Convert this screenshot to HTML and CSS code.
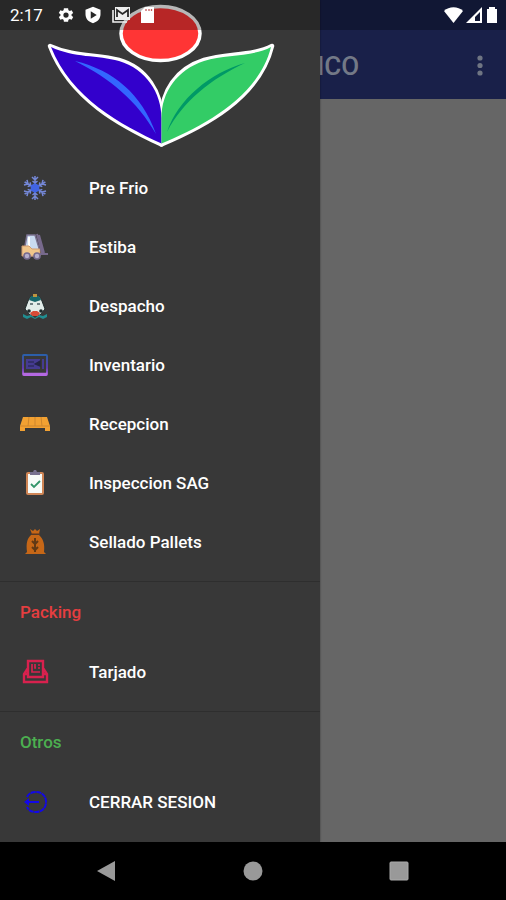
FILE: index.html
```html
<!DOCTYPE html>
<html lang="es">
<head>
<meta charset="utf-8">
<meta name="viewport" content="width=device-width, initial-scale=1">
<title>Menu</title>
<link rel="stylesheet" href="styles.css">
</head>
<body>
<div class="screen">
  <header class="app-bar">
    <h1 class="app-title">ICO</h1>
    <button class="more" type="button" aria-label="Opciones">
      <svg width="8" height="24" viewBox="0 0 8 24"><g fill="#6f7583"><circle cx="4" cy="4" r="2.6"/><circle cx="4" cy="11.5" r="2.6"/><circle cx="4" cy="19" r="2.6"/></g></svg>
    </button>
  </header>
  <main class="content"></main>

  <aside class="drawer">
    <div class="drawer-header">
      <svg class="logo" viewBox="0 0 320 159" aria-hidden="true">
        <ellipse cx="160.5" cy="33.5" rx="39.5" ry="27" fill="#ff3535" stroke="#fff" stroke-width="3.5"/>
        <g fill="#fff" stroke="#fff" stroke-width="4.5" stroke-linejoin="round">
          <path d="M50 46C74 57 98 54 119 60C147 68 161.500 93 161.500 118V144.500C121 126 70 99 50 46Z"/>
          <path d="M272 46C253 56 226 53 204 60C176 69 161.500 91 161.500 118V144.500C203 127 259 99 272 46Z"/>
        </g>
        <path d="M51 47C74 58 98 55 119 61C146 69 161.500 93 161.500 118V143.500C121 125 71 98 51 47Z" fill="#3300cc"/>
        <path d="M271 47C253 57 226 54 204 61C177 70 161.500 92 161.500 118V143.500C203 126 258 98 271 47Z" fill="#33cc66"/>
        <path d="M75 61C113 70 142 94 156 134C137 101 111 79 75 61Z" fill="#3366ff"/>
        <path d="M245 63C210 73 178 99 167 132C183 101 211 79 245 63Z" fill="#009966"/>
      </svg>
    </div>
    <nav>
      <ul class="menu">
        <li><a class="item" href="#"><svg class="icon" viewBox="0 0 30 30"><g stroke="#7588d8" stroke-width="1.5" fill="none"><g id="arm"><path d="M15 15V3M12 4L15 7L18 4M12.500 8L15 10L17.500 8"/></g><use href="#arm" transform="rotate(60 15 15)"/><use href="#arm" transform="rotate(120 15 15)"/><use href="#arm" transform="rotate(180 15 15)"/><use href="#arm" transform="rotate(240 15 15)"/><use href="#arm" transform="rotate(300 15 15)"/></g><path d="M15 10L19.300 12.500V17.500L15 20L10.700 17.500V12.500Z" fill="#4164e4"/></svg><span>Pre Frio</span></a></li>
        <li><a class="item" href="#"><svg class="icon" viewBox="0 0 30 30"><path d="M5 14L7 3H15L19 16V24H5Z" fill="#c9daf0" stroke="#79708f" stroke-width="1.5"/><path d="M9 5V14" stroke="#fff" stroke-width="2"/><path d="M2 14H9L12 17H20V24H2Z" fill="#f0c68b" stroke="#d29c70"/><path d="M17 2L22 21M19 3L24 21M20 22H28" stroke="#77698c" stroke-width="2" fill="none"/><g fill="#b5aecb" stroke="#766b8e" stroke-width="1.6"><circle cx="7" cy="24" r="3"/><circle cx="17" cy="24" r="3"/></g></svg><span>Estiba</span></a></li>
        <li><a class="item" href="#"><svg class="icon" viewBox="0 0 30 30"><path d="M8 10L10 6H20L22 10L25 18L20 24H10L5 18Z" fill="#e2ece9" stroke="#202b2c"/><path d="M9 9L11 5H19L21 9L15 11Z" fill="#17666a"/><path d="M13 3H17V6H13Z" fill="#bc9440"/><path d="M10 12H13V14H10ZM17 12H20V14H17Z" fill="#718083"/><circle cx="9" cy="20" r="1.8" fill="#202b2c"/><circle cx="21" cy="20" r="1.8" fill="#202b2c"/><path d="M10 22L13 20H17L20 22L18 25H12Z" fill="#d64b36"/><path d="M3 23L7 25L11 24L15 27L19 24L23 25L27 23V26L23 28L19 26L15 28L11 26L7 28L3 26Z" fill="#208e91"/></svg><span>Despacho</span></a></li>
        <li><a class="item" href="#"><svg class="icon" viewBox="0 0 30 30"><defs><linearGradient id="screen" x2="0" y2="1"><stop stop-color="#2b5fa9"/><stop offset=".65" stop-color="#653cba"/><stop offset="1" stop-color="#b765e8"/></linearGradient></defs><rect x="3" y="5" width="24" height="20" rx="1" fill="none" stroke="url(#screen)" stroke-width="1.8"/><path d="M3 24H27" stroke="#b46ae0" stroke-width="2.5"/><path d="M6 9H20V19H6ZM22 9H24V19H22Z" fill="#453b91"/><path d="M8 12H14M8 16H14M15 14L20 11V16Z" stroke="#232445" stroke-width="1.2" fill="#232445"/></svg><span>Inventario</span></a></li>
        <li><a class="item" href="#"><svg class="icon" viewBox="0 0 30 30"><path d="M3 8H27L30 17V22H25V19H5V22H0V17Z" fill="#f2a132"/><path d="M9 8L8 17M15 8V17M21 8L22 17M0 17H30" stroke="#ce862c" stroke-width="1"/></svg><span>Recepcion</span></a></li>
        <li><a class="item" href="#"><svg class="icon" viewBox="0 0 30 30"><rect x="7" y="5" width="16" height="21" rx="1" fill="#f7fbf8" stroke="#cf8555" stroke-width="2"/><path d="M10 4H13L14 2H16L17 4H20V7H10Z" fill="#77718f"/><path d="M11 16L14 19L20 13" fill="none" stroke="#329569" stroke-width="1.8"/></svg><span>Inspeccion SAG</span></a></li>
        <li><a class="item" href="#"><svg class="icon" viewBox="0 0 30 30"><path d="M10 2L13 4L15 2L17 4L20 2L19 7H12ZM11 8H19C23 12 25 16 24 25L26 27H5L7 25C6 16 7 12 11 8Z" fill="#c66717"/><path d="M11 7H20" stroke="#723d19" stroke-width="1.2"/><path d="M15 11V25M15 17L12 14M15 17L18 14M15 23L12 20M15 23L18 20" stroke="#603915" stroke-width="2"/></svg><span>Sellado Pallets</span></a></li>
      </ul>
      <section class="group">
        <h2 class="group-title packing">Packing</h2>
        <ul class="menu">
          <li><a class="item" href="#"><svg class="icon" viewBox="0 0 30 30"><g fill="none" stroke="#d8214e" stroke-width="2.4"><path d="M8 17V4H23V17M8 11L4 17V25H27V17L23 11M4 17H8V20H23V17H27"/><path d="M12 7V15H20M15 7V11H16M18 8H20M18 11H20" stroke-width="1.7"/></g></svg><span>Tarjado</span></a></li>
        </ul>
      </section>
      <section class="group">
        <h2 class="group-title others">Otros</h2>
        <ul class="menu">
          <li><a class="item" href="#"><svg class="icon" viewBox="0 0 30 30"><g fill="none" stroke="#1208e8" stroke-width="2"><path d="M7 10C9 6 12 5 16 5C22 5 26 9 26 15C26 21 22 25 16 25C12 25 9 24 7 20" stroke-dasharray="5 .6"/><path d="M7 15H19"/></g><path d="M4 15L9 11V19Z" fill="#1208e8"/></svg><span>CERRAR SESION</span></a></li>
        </ul>
      </section>
    </nav>
  </aside>

  <div class="status">
    <div class="status-left">
      <span class="time">2:17</span>
      <svg width="18" height="18" viewBox="0 0 24 24"><path fill="#fff" d="M19.400 13a7.500 7.500 0 0 0 0-2l2.200-1.700-2.100-3.700-2.600 1a8 8 0 0 0-1.700-1L14.800 3H9.200l-.4 2.600a8 8 0 0 0-1.700 1l-2.600-1-2.100 3.700L4.600 11a7.500 7.500 0 0 0 0 2l-2.200 1.700 2.100 3.700 2.600-1a8 8 0 0 0 1.700 1l.4 2.600h5.600l.4-2.600a8 8 0 0 0 1.700-1l2.600 1 2.100-3.700ZM12 15.500a3.500 3.500 0 1 1 0-7 3.500 3.500 0 0 1 0 7Z"/></svg>
      <svg width="18" height="18" viewBox="0 0 24 24"><path fill="#fff" fill-rule="evenodd" d="M12 1L22 5V11C22 17 18 21 12 23C6 21 2 17 2 11V5ZM9 7V17L17 12Z"/></svg>
      <svg width="20" height="18" viewBox="0 0 20 18"><path d="M2 4V16H16" fill="none" stroke="#eee" stroke-width="1.6"/><path d="M4 1H19V14H4Z" fill="#eee"/><path d="M6 11V4L11.500 8L17 4V11" fill="none" stroke="#282828" stroke-width="1.8"/></svg>
      <svg width="14" height="18" viewBox="0 0 14 18"><path fill="#fff" d="M5 1H14V17H1V5Z"/><path d="M6 3V5M9 3V5M11.500 3V5" stroke="#c56060" stroke-width="1.3"/></svg>
    </div>
    <div class="status-right">
      <svg width="19" height="18" viewBox="0 0 19 18"><path fill="#fff" d="M0 5C5 0 14 0 19 5L9.500 17Z"/></svg>
      <svg width="17" height="18" viewBox="0 0 17 18"><path fill="#fff" fill-rule="evenodd" d="M0 17L16 1V17ZM9 15H14V6L9 11Z"/></svg>
      <svg width="12" height="18" viewBox="0 0 12 18"><path fill="#fff" d="M3 3V1H9V3H11V17H1V3Z"/></svg>
    </div>
  </div>
</div>
<footer class="system-nav">
  <button type="button" aria-label="Atrás"><svg width="22" height="22" viewBox="0 0 22 22"><path d="M1 11L19 1V21Z" fill="#999"/></svg></button>
  <button type="button" aria-label="Inicio"><svg width="22" height="22" viewBox="0 0 22 22"><circle cx="11" cy="11" r="9.500" fill="#999"/></svg></button>
  <button type="button" aria-label="Recientes"><svg width="22" height="22" viewBox="0 0 22 22"><rect x="2" y="2" width="18" height="18" rx="1" fill="#999" stroke="#aaa"/></svg></button>
</footer>
</body>
</html>
```
FILE: styles.css
```css
* {
  box-sizing: border-box;
}

body {
  margin: 0;
  min-height: 100vh;
  display: flex;
  flex-direction: column;
  background: #000;
  font-family: Roboto, "Liberation Sans", sans-serif;
}

button {
  border: 0;
  padding: 0;
  background: none;
  display: grid;
  place-items: center;
}

svg {
  display: block;
}

.screen {
  position: relative;
  flex: 1;
  display: flex;
  flex-direction: column;
  background: #666;
}

.app-bar {
  display: flex;
  align-items: center;
  justify-content: space-between;
  height: 99px;
  padding: 32px 22px 0 317px;
  background: #192049;
}

.app-title {
  margin: 0;
  font-size: 26px;
  font-weight: 500;
  line-height: 32px;
  color: #737987;
}

.content {
  flex: 1;
}

.drawer {
  position: absolute;
  top: 0;
  bottom: 0;
  left: 0;
  width: 320px;
  background: #383838;
  box-shadow: 0 0 2px #0006;
}

.drawer-header {
  height: 158px;
}

.logo {
  width: 100%;
}

.menu {
  list-style: none;
  margin: 0;
  padding: 0;
}

.item {
  display: flex;
  align-items: center;
  gap: 39px;
  height: 59px;
  padding-left: 20px;
  color: #fff;
  font-size: 17px;
  font-weight: 500;
  text-decoration: none;
}

.icon {
  width: 30px;
  height: 30px;
}

.group {
  margin-top: 10px;
  border-top: 1px solid #2e2e2e;
}

.group-title {
  margin: 0;
  padding-left: 20px;
  font-size: 17px;
  font-weight: 500;
  line-height: 60px;
}

.packing {
  color: #e53e40;
}

.others {
  color: #4caf50;
}

.status {
  position: absolute;
  top: 0;
  left: 0;
  right: 0;
  display: flex;
  justify-content: space-between;
  align-items: center;
  height: 30px;
  padding: 0 8px 0 10px;
  background: #00000048;
}

.status-left {
  display: flex;
  align-items: center;
  gap: 9px;
}

.time {
  width: 38px;
  font-size: 17px;
  color: #fff;
}

.status-right {
  display: flex;
  align-items: center;
  gap: 3px;
}

.system-nav {
  display: flex;
  justify-content: center;
  align-items: center;
  gap: 124px;
  height: 58px;
}
```
